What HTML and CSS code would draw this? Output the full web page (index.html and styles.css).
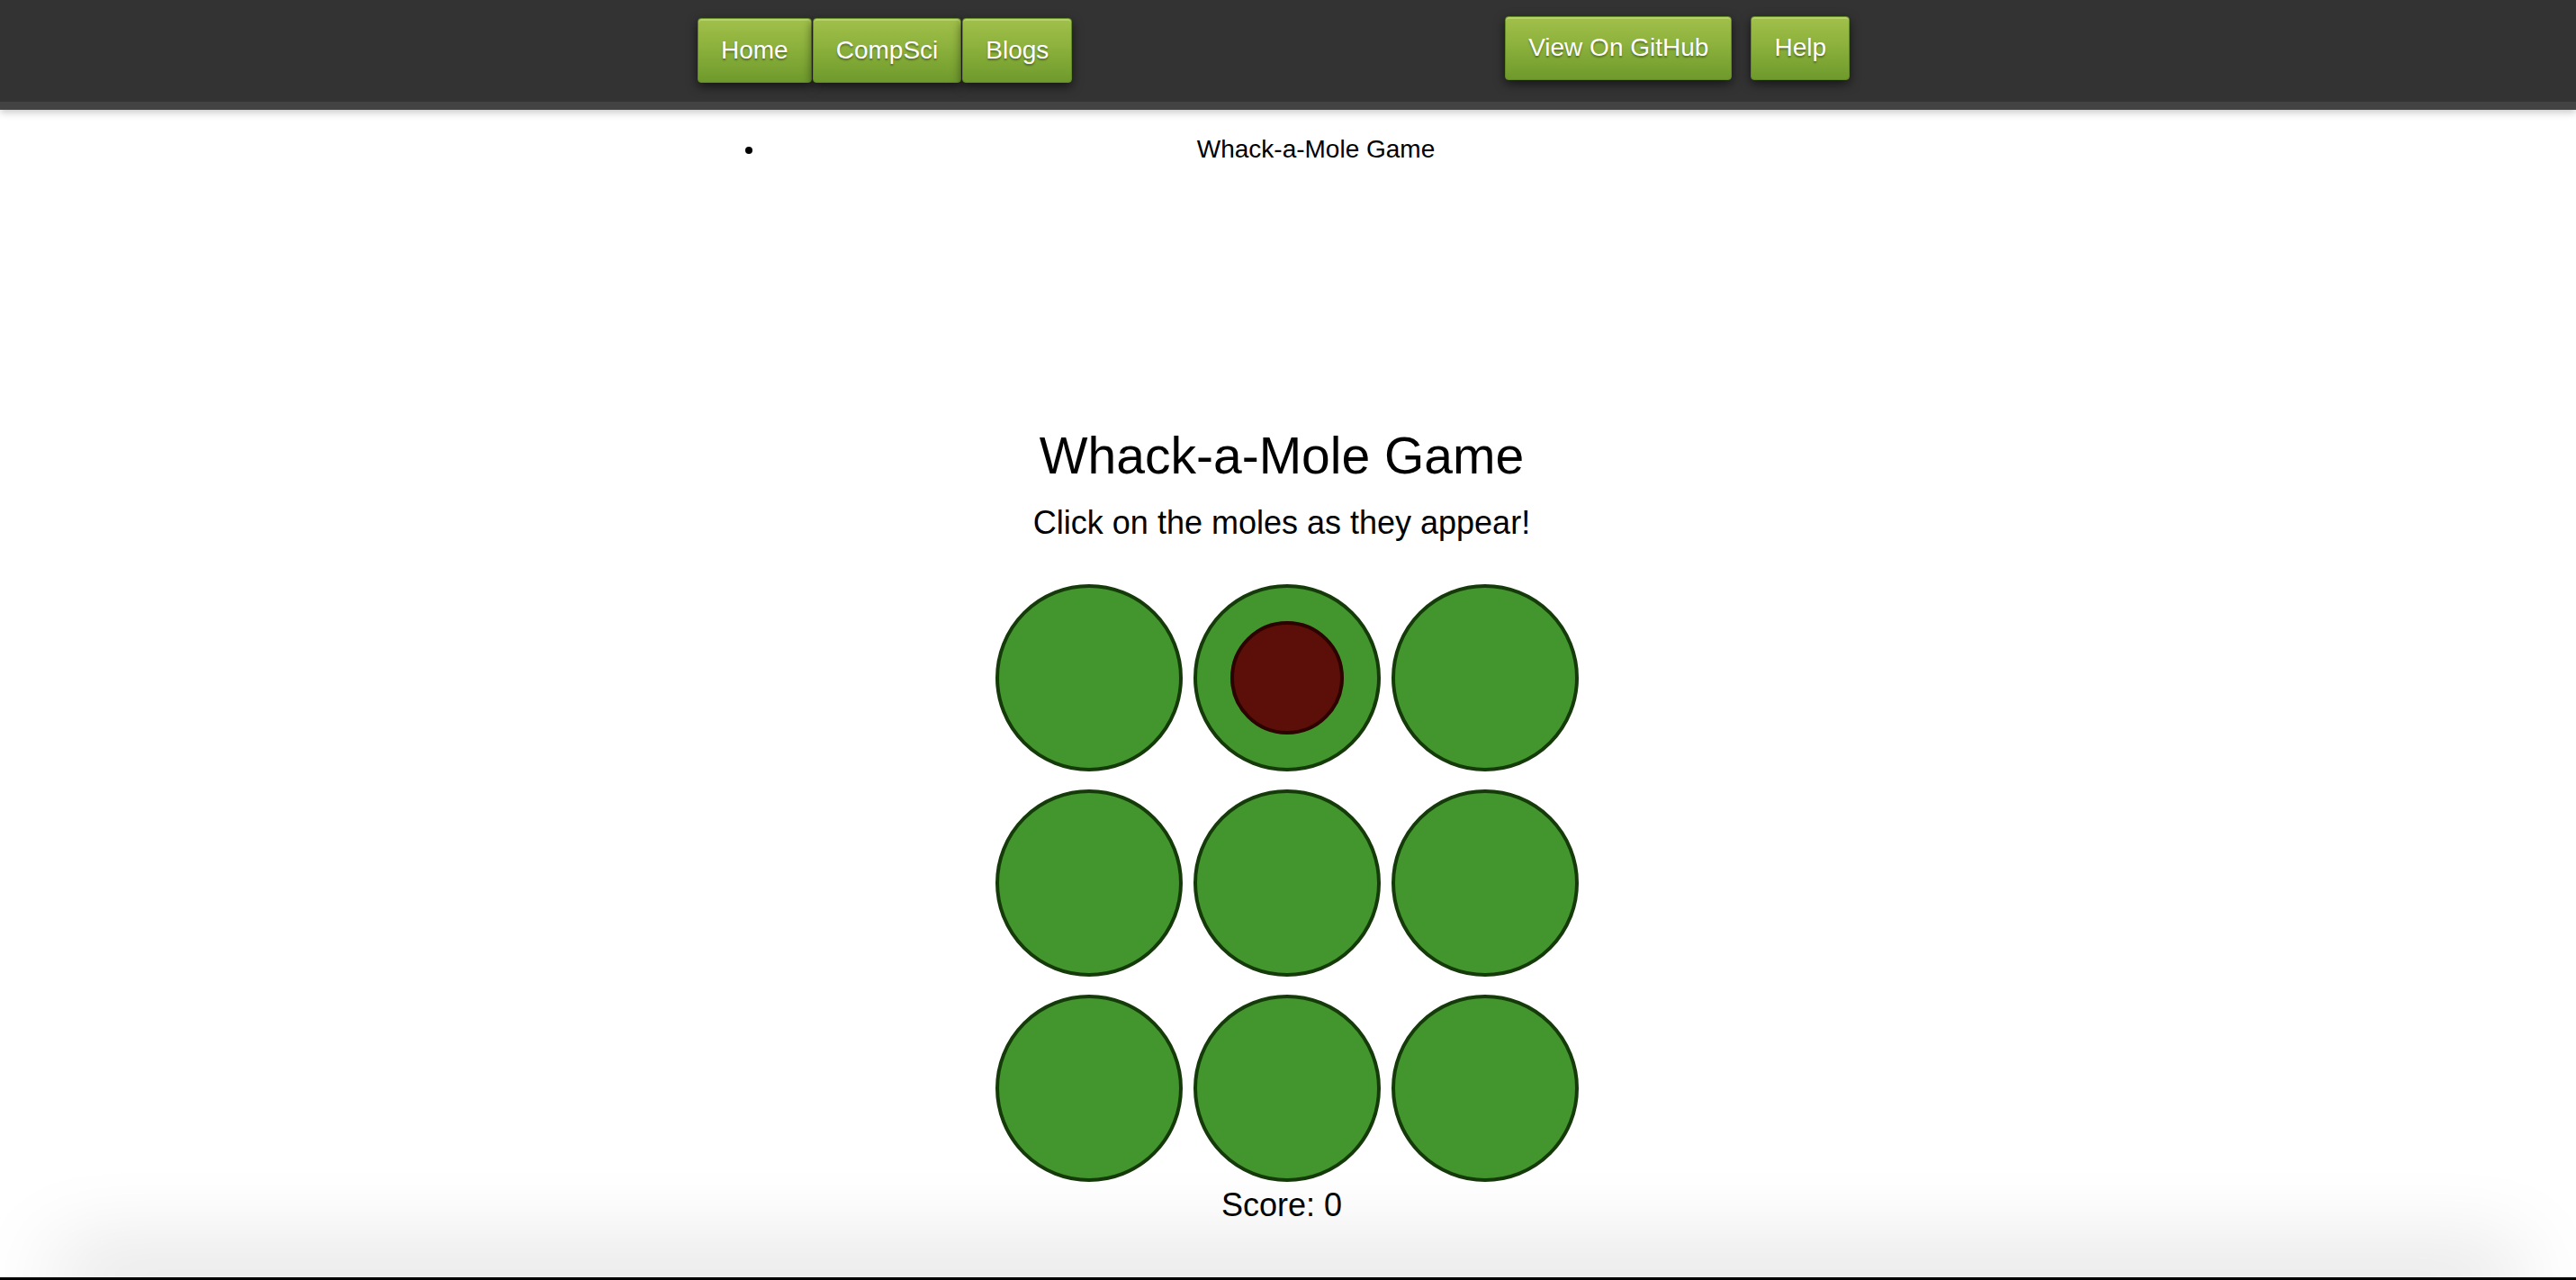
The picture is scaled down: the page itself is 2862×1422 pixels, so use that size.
FILE: index.html
```html
<!DOCTYPE html>
<html lang="en">
<head>
<meta charset="utf-8">
<title>Whack-a-Mole Game</title>
<link rel="stylesheet" href="styles.css">
</head>
<body>
<header class="topbar">
  <div class="topbar-inner">
    <nav class="nav nav-left">
      <a class="btn" href="#">Home</a>
      <a class="btn" href="#">CompSci</a>
      <a class="btn" href="#">Blogs</a>
    </nav>
    <nav class="nav nav-right">
      <a class="btn" href="#">View On GitHub</a>
      <a class="btn" href="#">Help</a>
    </nav>
  </div>
</header>
<main class="page">
  <ul class="crumbs">
    <li>Whack-a-Mole Game</li>
  </ul>
  <section class="game">
    <h1 class="title">Whack-a-Mole Game</h1>
    <p class="subtitle">Click on the moles as they appear!</p>
    <div class="board">
      <div class="hole"></div>
      <div class="hole"><div class="mole"></div></div>
      <div class="hole"></div>
      <div class="hole"></div>
      <div class="hole"></div>
      <div class="hole"></div>
      <div class="hole"></div>
      <div class="hole"></div>
      <div class="hole"></div>
    </div>
    <p class="score">Score: 0</p>
  </section>
</main>
<div class="bottom-shade"></div>
<div class="bottom-edge"></div>
</body>
</html>
```
FILE: styles.css
```css
html, body {
  margin: 0;
  padding: 0;
  background: #ffffff;
  font-family: "Liberation Sans", Arial, Helvetica, sans-serif;
  color: #000;
  overflow: hidden;
}

.topbar {
  background: #333333;
  height: 113px;
  border-bottom: 9px solid #434343;
  box-shadow: 0 3px 8px rgba(0, 0, 0, 0.22);
  padding-right: 14px;
  position: relative;
  z-index: 2;
}

.topbar-inner {
  width: 1298px;
  margin: 0 auto;
  display: flex;
  justify-content: space-between;
  align-items: flex-start;
}

.nav {
  display: flex;
}

.nav-left {
  margin-top: 20px;
  gap: 1px;
}

.nav-right {
  margin-top: 18px;
  margin-right: 18px;
  gap: 21px;
}

.btn {
  display: block;
  font-size: 28px;
  line-height: 32px;
  padding: 19px 25px;
  color: #ffffff;
  text-decoration: none;
  border: 1px solid #648a26;
  border-radius: 4px;
  background: linear-gradient(to bottom, #a1c04b 0%, #8cb13c 45%, #6e9a2c 100%);
  box-shadow: inset 0 2px 0 rgba(200, 225, 130, 0.55), 0 4px 12px rgba(0, 0, 0, 0.6);
  text-shadow: 0 2px 2px rgba(0, 0, 0, 0.35);
}

.nav-right .btn {
  padding-top: 18px;
  padding-bottom: 19px;
}

.page {
  padding-right: 14px;
}

.crumbs {
  width: 1298px;
  margin: 28px auto 0;
  padding: 0 0 0 76px;
  box-sizing: border-box;
  font-size: 28px;
  line-height: 32px;
  text-align: center;
}

.game {
  display: flex;
  flex-direction: column;
  align-items: center;
  margin-top: 291px;
}

.title {
  margin: 0;
  font-size: 57px;
  line-height: 66px;
  font-weight: normal;
}

.subtitle {
  margin: 21px 0 0;
  font-size: 36px;
  line-height: 41px;
}

.board {
  margin: 48px 0 0 11px;
  display: grid;
  grid-template-columns: repeat(3, 208px);
  grid-auto-rows: 208px;
  column-gap: 12px;
  row-gap: 20px;
}

.hole {
  box-sizing: border-box;
  width: 208px;
  height: 208px;
  border-radius: 50%;
  background: #43962d;
  border: 4px solid #163b0a;
  display: flex;
  align-items: center;
  justify-content: center;
}

.mole {
  box-sizing: border-box;
  width: 126px;
  height: 126px;
  border-radius: 50%;
  background: #5b0f08;
  border: 4px solid #2c0301;
}

.score {
  margin: 5px 0 0;
  font-size: 36px;
  line-height: 41px;
}

.bottom-shade {
  position: fixed;
  left: 90px;
  right: 90px;
  bottom: 3px;
  height: 0;
  box-shadow: 0 0 95px 28px rgba(0, 0, 0, 0.15);
  pointer-events: none;
}

.bottom-edge {
  position: fixed;
  left: 0;
  right: 0;
  bottom: 0;
  height: 3px;
  background: #000;
}
```
